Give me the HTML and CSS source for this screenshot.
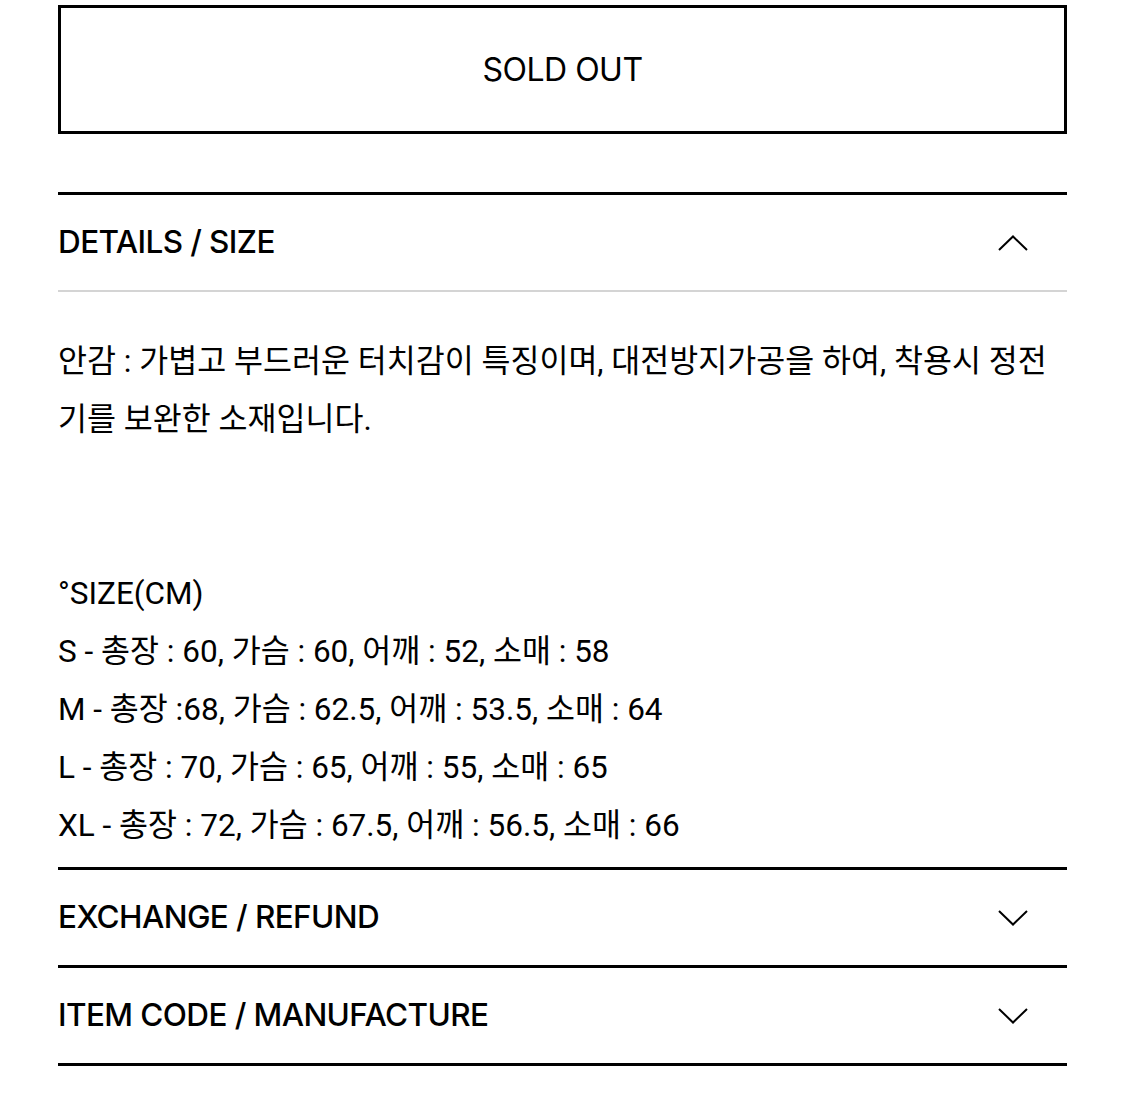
FILE: index.html
```html
<!DOCTYPE html>
<html lang="ko">
<head>
    <meta charset="utf-8">
    <title>Product info</title>
    <link rel="stylesheet" href="styles.css">
</head>
<body>
    <div class="container">
        <button class="sold-out" type="button">SOLD OUT</button>

        <div class="section open">
            <div class="section-head">
                <span class="section-title">DETAILS / SIZE</span>
                <svg class="chevron" width="30" height="16" viewBox="0 0 30 16">
                    <polyline points="1,15 15,1.5 29,15" fill="none" stroke="#000" stroke-width="2"/>
                </svg>
            </div>
            <div class="section-body">
                <p>안감 : 가볍고 부드러운 터치감이 특징이며, 대전방지가공을 하여, 착용시 정전기를 보완한 소재입니다.</p>
                <p class="spacer"></p>
                <p>°SIZE(CM)</p>
                <p>S - 총장 : 60, 가슴 : 60, 어깨 : 52, 소매 : 58</p>
                <p>M - 총장 :68, 가슴 : 62.5, 어깨 : 53.5, 소매 : 64</p>
                <p>L - 총장 : 70, 가슴 : 65, 어깨 : 55, 소매 : 65</p>
                <p>XL - 총장 : 72, 가슴 : 67.5, 어깨 : 56.5, 소매 : 66</p>
            </div>
        </div>

        <div class="section">
            <div class="section-head">
                <span class="section-title">EXCHANGE / REFUND</span>
                <svg class="chevron" width="30" height="16" viewBox="0 0 30 16">
                    <polyline points="1,1 15,14.5 29,1" fill="none" stroke="#000" stroke-width="2"/>
                </svg>
            </div>
        </div>

        <div class="section last">
            <div class="section-head">
                <span class="section-title">ITEM CODE / MANUFACTURE</span>
                <svg class="chevron" width="30" height="16" viewBox="0 0 30 16">
                    <polyline points="1,1 15,14.5 29,1" fill="none" stroke="#000" stroke-width="2"/>
                </svg>
            </div>
        </div>
    </div>
</body>
</html>
```

FILE: styles.css
```css
body {
    margin: 0;
    background: #fff;
    color: #000;
    font-family: Inter, "Noto Sans CJK KR", sans-serif;
}
.container {
    padding: 5px 58px 0;
}
.sold-out {
    display: block;
    width: 100%;
    height: 129px;
    background: #fff;
    border: 3px solid #000;
    font-family: Inter, sans-serif;
    font-size: 32px;
    letter-spacing: -0.5px;
    color: #000;
    margin: 0 0 58px;
}
.section {
    border-top: 3px solid #000;
}
.section.last {
    border-bottom: 3px solid #000;
}
.section-head {
    height: 95px;
    display: flex;
    align-items: center;
    justify-content: space-between;
    padding-right: 39px;
}
.section-title {
    font-size: 31.5px;
    font-weight: 500;
    letter-spacing: -0.6px;
    margin-top: -2px;
}
.chevron {
    display: block;
}
.section.open .section-head {
    border-bottom: 2px solid #d4d4d4;
}
.section-body {
    padding: 41px 0 12px;
    font-family: Roboto, "Noto Sans CJK KR", sans-serif;
    font-size: 31.5px;
    line-height: 58px;
}
.section-body p {
    margin: 0;
}
.section-body .spacer {
    height: 116px;
}
```
